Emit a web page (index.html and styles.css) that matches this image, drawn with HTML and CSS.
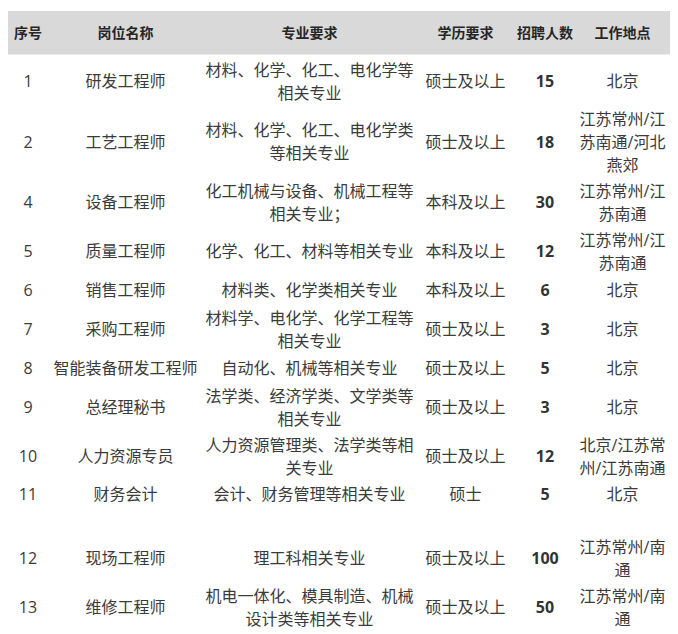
FILE: index.html
```html
<!DOCTYPE html>
<html lang="zh-CN">
<head>
<meta charset="utf-8">
<title>招聘岗位</title>
<link rel="stylesheet" href="styles.css">
</head>
<body>
<div class="wrap">
<table class="jobs">
  <colgroup>
    <col class="c-no"><col class="c-name"><col class="c-major"><col class="c-edu"><col class="c-num"><col class="c-loc">
  </colgroup>
  <thead>
    <tr><th>序号</th><th>岗位名称</th><th>专业要求</th><th>学历要求</th><th>招聘人数</th><th>工作地点</th></tr>
  </thead>
  <tbody>
    <tr><td>1</td><td>研发工程师</td><td class="major">材料、化学、化工、电化学等相关专业</td><td>硕士及以上</td><td class="num">15</td><td>北京</td></tr>
    <tr><td>2</td><td>工艺工程师</td><td class="major">材料、化学、化工、电化学类等相关专业</td><td>硕士及以上</td><td class="num">18</td><td>江苏常州/江苏南通/河北燕郊</td></tr>
    <tr><td>4</td><td>设备工程师</td><td class="major">化工机械与设备、机械工程等相关专业；</td><td>本科及以上</td><td class="num">30</td><td>江苏常州/江苏南通</td></tr>
    <tr><td>5</td><td>质量工程师</td><td class="major">化学、化工、材料等相关专业</td><td>本科及以上</td><td class="num">12</td><td>江苏常州/江苏南通</td></tr>
    <tr><td>6</td><td>销售工程师</td><td class="major">材料类、化学类相关专业</td><td>本科及以上</td><td class="num">6</td><td>北京</td></tr>
    <tr><td>7</td><td>采购工程师</td><td class="major">材料学、电化学、化学工程等相关专业</td><td>硕士及以上</td><td class="num">3</td><td>北京</td></tr>
    <tr><td>8</td><td>智能装备研发工程师</td><td class="major">自动化、机械等相关专业</td><td>硕士及以上</td><td class="num">5</td><td>北京</td></tr>
    <tr><td>9</td><td>总经理秘书</td><td class="major">法学类、经济学类、文学类等相关专业</td><td>硕士及以上</td><td class="num">3</td><td>北京</td></tr>
    <tr><td>10</td><td>人力资源专员</td><td class="major">人力资源管理类、法学类等相关专业</td><td>硕士及以上</td><td class="num">12</td><td>北京/江苏常州/江苏南通</td></tr>
    <tr class="tall"><td>11</td><td>财务会计</td><td class="major">会计、财务管理等相关专业</td><td>硕士</td><td class="num">5</td><td>北京</td></tr>
    <tr><td>12</td><td>现场工程师</td><td class="major">理工科相关专业</td><td>硕士及以上</td><td class="num">100</td><td>江苏常州/南通</td></tr>
    <tr><td>13</td><td>维修工程师</td><td class="major">机电一体化、模具制造、机械设计类等相关专业</td><td>硕士及以上</td><td class="num">50</td><td>江苏常州/南通</td></tr>
  </tbody>
</table>
</div>
</body>
</html>
```

FILE: styles.css
```css
html, body {
  margin: 0;
  padding: 0;
  background: #ffffff;
}

.wrap {
  padding: 11px 8px 0 8px;
}

.jobs {
  width: 662px;
  border-collapse: collapse;
  table-layout: fixed;
  font-family: "Open Sans", "Noto Sans CJK SC", sans-serif;
  font-size: 16px;
  color: #3b3b3b;
}

.c-no { width: 40px; }
.c-name { width: 155px; }
.c-major { width: 213px; }
.c-edu { width: 99px; }
.c-num { width: 60px; }
.c-loc { width: 95px; }

.jobs thead tr {
  height: 43px;
  background: #d9d9d9;
}

.jobs th {
  padding: 0;
  font-size: 14px;
  font-weight: bold;
  color: #262626;
  text-align: center;
  vertical-align: middle;
  border-bottom: 1px solid #ececec;
}

.jobs tbody tr {
  height: 29px;
}

.jobs tbody tr:first-child td {
  padding-top: 4px;
}

.jobs td {
  padding: 1px 2px 2px 2px;
  line-height: 23px;
  text-align: center;
  vertical-align: middle;
}

.jobs td.major {
  padding-left: 1px;
  padding-right: 1px;
}

.jobs td.num {
  font-weight: bold;
  color: #333333;
}

.jobs tr.tall {
  height: 53px;
}

.jobs tr.tall td {
  vertical-align: top;
}
```
